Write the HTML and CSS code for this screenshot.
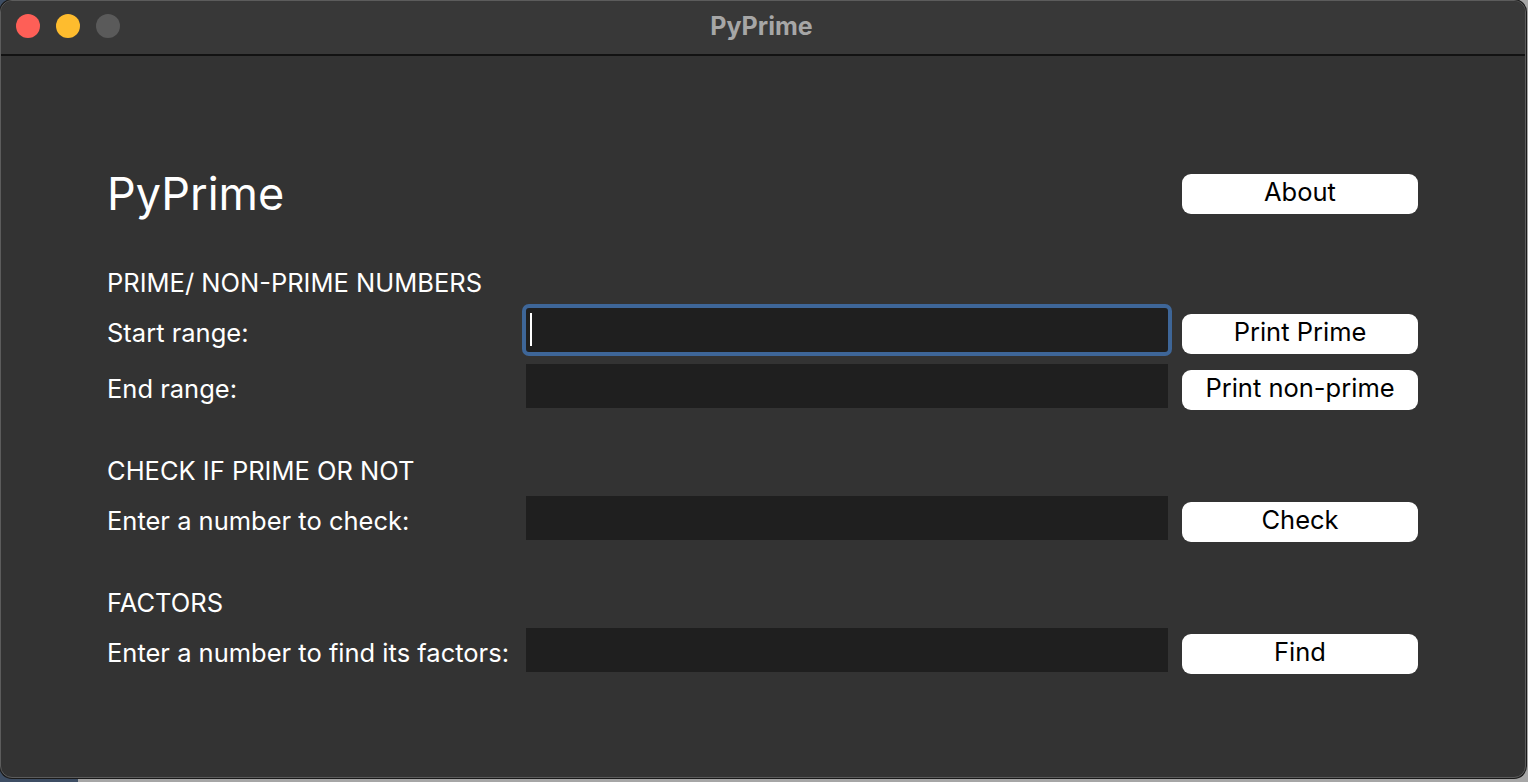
FILE: index.html
```html
<!DOCTYPE html>
<html lang="en">
<head>
    <meta charset="UTF-8">
    <title>PyPrime</title>
    <link rel="stylesheet" href="styles.css">
</head>
<body>
    <div class="window">
        <div class="titlebar">
            <div class="lights">
                <span class="light red"></span>
                <span class="light yellow"></span>
                <span class="light gray"></span>
            </div>
            <div class="title">PyPrime</div>
        </div>

        <main class="content">
            <div class="row top-row">
                <h1 class="app-name">PyPrime</h1>
                <button class="btn">About</button>
            </div>

            <section class="group first">
                <h2>PRIME/ NON-PRIME NUMBERS</h2>
                <div class="row">
                    <label>Start range:</label>
                    <div class="field focused"><span class="caret"></span></div>
                    <button class="btn">Print Prime</button>
                </div>
                <div class="row">
                    <label>End range:</label>
                    <div class="field"></div>
                    <button class="btn">Print non-prime</button>
                </div>
            </section>

            <section class="group">
                <h2>CHECK IF PRIME OR NOT</h2>
                <div class="row">
                    <label>Enter a number to check:</label>
                    <div class="field"></div>
                    <button class="btn">Check</button>
                </div>
            </section>

            <section class="group">
                <h2>FACTORS</h2>
                <div class="row">
                    <label>Enter a number to find its factors:</label>
                    <div class="field"></div>
                    <button class="btn">Find</button>
                </div>
            </section>
        </main>
    </div>
</body>
</html>
```

FILE: styles.css
```css
*{
    box-sizing: border-box;
    margin: 0;
}
body{
    margin: 0;
    width: 1528px;
    height: 782px;
    overflow: hidden;
    background: linear-gradient(to right, #3e4e64 78px, #a6a6a6 78px);
    font-family: Inter, "Liberation Sans", sans-serif;
}
.window{
    width: 1526px;
    height: 778px;
    background: #333333;
    border: 1px solid #5c5c5c;
    border-radius: 12px;
    overflow: hidden;
    box-shadow: 0 0 0 1px #1a1a1a;
}
.titlebar{
    height: 55px;
    background: #383838;
    border-bottom: 2px solid #121212;
    display: flex;
    align-items: flex-start;
    padding-top: 13px;
}
.lights{
    display: flex;
    gap: 16px;
    padding-left: 15px;
}
.light{
    width: 24px;
    height: 24px;
    border-radius: 50%;
}
.red{ background: #fe5f57; }
.yellow{ background: #febc2e; }
.gray{ background: #5a5a5a; }
.title{
    flex: 1;
    text-align: center;
    margin-right: 104px;
    margin-left: -18px;
    color: #a6a6a6;
    font-weight: 700;
    font-size: 25px;
    line-height: 24px;
}
.content{
    padding: 118px 0 0 106px;
    color: #ffffff;
}
.row{
    display: grid;
    grid-template-columns: 405px 642px 236px;
    column-gap: 14px;
    align-items: start;
    height: 46px;
}
.row + .row{
    margin-top: 10px;
}
.top-row{
    height: 40px;
}
.app-name{
    grid-column: 1 / 3;
    font-weight: 400;
    font-size: 45px;
    line-height: 40px;
}
.top-row .btn{
    margin-top: 0;
}
.group{
    margin-top: 46px;
}
.group.first{
    margin-top: 54px;
}
h2{
    font-weight: 400;
    font-size: 25.5px;
    line-height: 30px;
    margin-bottom: 10px;
}
label{
    font-size: 25.5px;
    line-height: 30px;
    margin-top: 10px;
    white-space: nowrap;
}
.field{
    height: 44px;
    background: #1f1f1f;
}
.field.focused{
    border-radius: 3px;
    box-shadow: 0 0 0 4px #3e6698;
    padding: 5px 4px;
}
.caret{
    display: block;
    width: 2px;
    height: 33px;
    background: #ffffff;
}
.btn{
    margin-top: 6px;
    height: 40px;
    background: #ffffff;
    color: #000000;
    border: none;
    border-radius: 9px;
    font-family: Inter, "Liberation Sans", sans-serif;
    font-size: 25.5px;
    line-height: 36px;
    padding: 0 0 4px;
}
```
